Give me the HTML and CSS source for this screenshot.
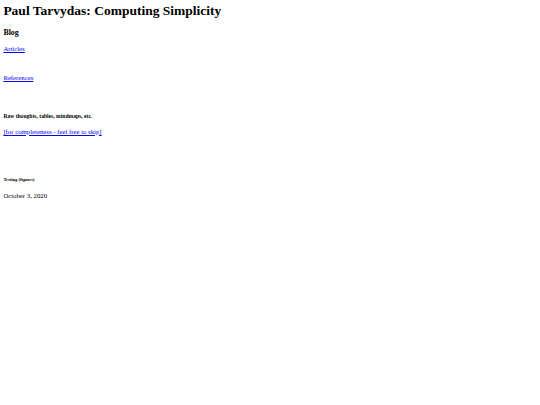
FILE: index.html
```html
<!DOCTYPE html>
<html>
<head>
<meta charset="utf-8">
<title>Paul Tarvydas: Computing Simplicity</title>
<link rel="stylesheet" href="styles.css">
</head>
<body>
<h1 class="title">Paul Tarvydas: Computing Simplicity</h1>
<h3 class="section">Blog</h3>
<p class="entry"><a href="#">Articles</a></p>
<p class="entry gap-refs"><a href="#">References</a></p>
<h5 class="sub gap-raw">Raw thoughts, tables, mindmaps, etc.</h5>
<p class="entry"><a href="#">[for completeness - feel free to skip]</a></p>
<h6 class="tiny gap-test">Testing (figures)</h6>
<p class="entry">October 3, 2020</p>
</body>
</html>
```
FILE: styles.css
```css
body {
  margin: 3.375px;
  font-family: "Liberation Serif", "Times New Roman", serif;
  font-size: 6.75px;
  color: #000;
  background: #fff;
}
a { color: #0000ee; }
.title {
  font-size: 13.5px;
  margin: 0 0 9px;
}
.section {
  font-size: 7.9px;
  margin: 7.9px 0;
}
.entry {
  margin: 6.75px 0;
}
.sub {
  font-size: 5.6px;
  margin: 9.35px 0;
}
.tiny {
  font-size: 4.52px;
  margin: 10.5px 0 9.5px;
}
.gap-refs { margin-top: 21.4px; }
.gap-raw { margin-top: 31.9px; }
.gap-test { margin-top: 42.5px; }
```
